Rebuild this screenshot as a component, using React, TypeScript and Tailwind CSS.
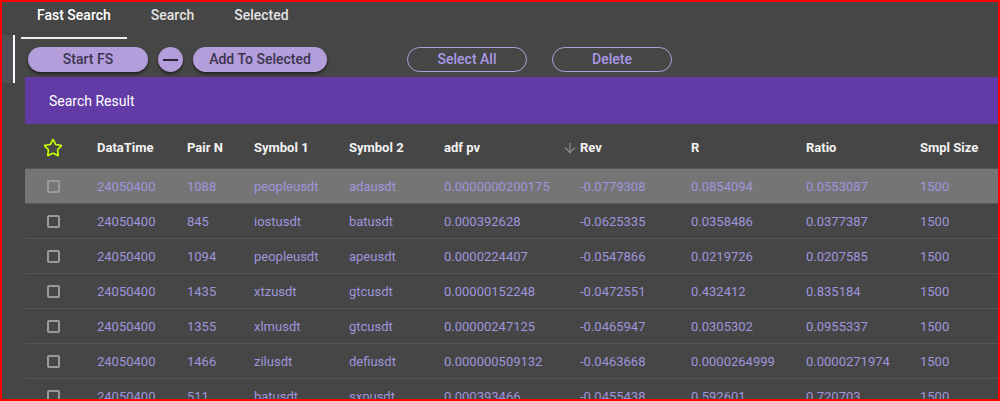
import { ArrowDown, Star } from "lucide-react";

const rows = [
  ["24050400", "1088", "peopleusdt", "adausdt", "0.0000000200175", "-0.0779308", "0.0854094", "0.0553087", "1500"],
  ["24050400", "845", "iostusdt", "batusdt", "0.000392628", "-0.0625335", "0.0358486", "0.0377387", "1500"],
  ["24050400", "1094", "peopleusdt", "apeusdt", "0.0000224407", "-0.0547866", "0.0219726", "0.0207585", "1500"],
  ["24050400", "1435", "xtzusdt", "gtcusdt", "0.00000152248", "-0.0472551", "0.432412", "0.835184", "1500"],
  ["24050400", "1355", "xlmusdt", "gtcusdt", "0.00000247125", "-0.0465947", "0.0305302", "0.0955337", "1500"],
  ["24050400", "1466", "zilusdt", "defiusdt", "0.000000509132", "-0.0463668", "0.0000264999", "0.0000271974", "1500"],
  ["24050400", "511", "batusdt", "sxpusdt", "0.000393466", "-0.0455438", "0.592601", "0.720703", "1500"],
];

const cols = "grid grid-cols-[72px_90px_67px_95px_95px_136px_111px_115px_114px_1fr]";

export default function App() {
  return (
    <div className="w-[1000px] h-[401px] overflow-hidden border-2 border-[#ff0000] bg-[#464646] font-['Roboto',sans-serif]">
      {/* tabs */}
      <div className="flex gap-2 pl-[19px] h-[37px]">
        {["Fast Search", "Search", "Selected"].map((t, i) => (
          <div
            key={t}
            className={`px-4 pt-[3px] text-[14px] font-medium leading-[20px] ${
              i === 0 ? "text-white border-b-2 border-[#eeeeee]" : "text-[#e2e2e2]"
            }`}
          >
            {t}
          </div>
        ))}
      </div>

      <div className="flex -mt-[4px]">
        <div className="w-[13px] h-[48px] shrink-0 bg-[#4f4f55] border-r-2 border-white" />

        <div className="flex-1 ml-[10px]">
          {/* actions */}
          <div className="flex items-center h-[25px] mt-[12px] ml-[3px]">
            <button className="w-[120px] h-[25px] rounded-full bg-[#b39ddb] text-[#3d3550] text-[14px] font-medium shadow-[0_2px_3px_rgba(0,0,0,0.55)]">
              Start FS
            </button>
            <button className="ml-[10px] w-[25px] h-[25px] rounded-full bg-[#b39ddb] flex items-center justify-center shadow-[0_2px_3px_rgba(0,0,0,0.55)]">
              <span className="block w-[15px] h-[2px] bg-[#2a2535]" />
            </button>
            <button className="ml-[10px] w-[134px] h-[25px] rounded-full bg-[#b39ddb] text-[#3d3550] text-[14px] font-medium shadow-[0_2px_3px_rgba(0,0,0,0.55)]">
              Add To Selected
            </button>
            <button className="ml-[80px] w-[120px] h-[25px] rounded-full border border-[#b39ddb] text-[#a99ae6] text-[14px] font-medium">
              Select All
            </button>
            <button className="ml-[25px] w-[120px] h-[25px] rounded-full border border-[#b39ddb] text-[#a99ae6] text-[14px] font-medium">
              Delete
            </button>
          </div>

          {/* result header */}
          <div className="mt-[5px] h-[47px] bg-[#633ba6] flex items-center pl-[24px] pt-[2px] text-white text-[14px]">
            Search Result
          </div>

          {/* table */}
          <div className={`${cols} h-[45px] items-center pt-[3px] border-b border-[#555555] text-[13px] font-bold text-[#f2f2f2]`}>
            <div className="pl-[18px]">
              <Star className="w-[20px] h-[20px] text-[#c6ff00]" strokeWidth={2} />
            </div>
            <div>DataTime</div>
            <div>Pair N</div>
            <div>Symbol 1</div>
            <div>Symbol 2</div>
            <div>adf pv</div>
            <div className="flex items-center -ml-[18px]">
              <ArrowDown className="w-[16px] h-[16px] text-[#8c8c8c] mr-[2px]" strokeWidth={1.75} />
              Rev
            </div>
            <div>R</div>
            <div>Ratio</div>
            <div>Smpl Size</div>
          </div>

          {rows.map((r, i) => (
            <div
              key={i}
              className={`${cols} h-[35px] items-center pt-[1px] border-b border-[#575757] text-[13px] text-[#9e95dc] ${
                i === 0 ? "bg-[#757575]" : ""
              }`}
            >
              <div className="pl-[22px]">
                <span className="block w-[13px] h-[13px] rounded-[2px] border-2 border-[#9a9a9a]" />
              </div>
              {r.map((c, j) => (
                <div key={j}>{c}</div>
              ))}
            </div>
          ))}
        </div>
      </div>
    </div>
  );
}
